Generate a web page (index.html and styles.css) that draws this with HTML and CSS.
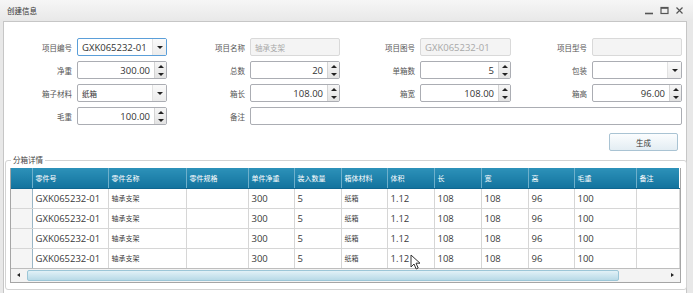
FILE: index.html
```html
<!DOCTYPE html>
<html>
<head>
  <title>创建信息</title>
  <link rel="stylesheet" href="styles.css">
</head>
<body>
  <div class="window">
    <div class="titlebar">
      <span class="title">创建信息</span>
      <div class="controls">
        <svg width="9" height="9" viewBox="0 0 9 9"><path d="M0 7.5h8" stroke="#555" stroke-width="1.6"/></svg>
        <svg width="9" height="9" viewBox="0 0 9 9"><rect x="1" y="1.5" width="7" height="6" fill="none" stroke="#555" stroke-width="1.2"/><path d="M1 2h7" stroke="#555" stroke-width="1.6"/></svg>
        <svg width="9" height="9" viewBox="0 0 9 9"><path d="M1.5 1.5l6 6M7.5 1.5l-6 6" stroke="#555" stroke-width="1.2"/></svg>
      </div>
    </div>

    <div class="panel">
      <div class="form">
        <label class="lbl">项目编号</label>
        <div class="field combo focus"><span class="val">GXK065232-01</span><span class="drop"><i class="down"></i></span></div>
        <label class="lbl">项目名称</label>
        <div class="field disabled"><span class="val cn">轴承支架</span></div>
        <label class="lbl">项目图号</label>
        <div class="field disabled"><span class="val">GXK065232-01</span></div>
        <label class="lbl">项目型号</label>
        <div class="field disabled"><span class="val"></span></div>

        <label class="lbl">净重</label>
        <div class="field num"><span class="val">300.00</span><span class="spinner"><span><i class="up"></i></span><span><i class="down"></i></span></span></div>
        <label class="lbl">总数</label>
        <div class="field num"><span class="val">20</span><span class="spinner"><span><i class="up"></i></span><span><i class="down"></i></span></span></div>
        <label class="lbl">单箱数</label>
        <div class="field num"><span class="val">5</span><span class="spinner"><span><i class="up"></i></span><span><i class="down"></i></span></span></div>
        <label class="lbl">包装</label>
        <div class="field combo"><span class="val"></span><span class="drop"><i class="down"></i></span></div>

        <label class="lbl">箱子材料</label>
        <div class="field combo"><span class="val cn">纸箱</span><span class="drop"><i class="down"></i></span></div>
        <label class="lbl">箱长</label>
        <div class="field num"><span class="val">108.00</span><span class="spinner"><span><i class="up"></i></span><span><i class="down"></i></span></span></div>
        <label class="lbl">箱宽</label>
        <div class="field num"><span class="val">108.00</span><span class="spinner"><span><i class="up"></i></span><span><i class="down"></i></span></span></div>
        <label class="lbl">箱高</label>
        <div class="field num"><span class="val">96.00</span><span class="spinner"><span><i class="up"></i></span><span><i class="down"></i></span></span></div>

        <label class="lbl">毛重</label>
        <div class="field num"><span class="val">100.00</span><span class="spinner"><span><i class="up"></i></span><span><i class="down"></i></span></span></div>
        <label class="lbl">备注</label>
        <div class="field memo"><span class="val"></span></div>
      </div>

      <div class="actions">
        <button class="button">生成</button>
      </div>

      <fieldset class="group">
        <legend>分箱详情</legend>
        <div class="grid">
          <table>
            <colgroup>
              <col style="width:21px"><col style="width:76px"><col style="width:78px"><col style="width:62px">
              <col style="width:46px"><col style="width:47px"><col style="width:46px"><col style="width:47px">
              <col style="width:47px"><col style="width:47px"><col style="width:46px"><col style="width:62px">
              <col style="width:43px">
            </colgroup>
            <thead>
              <tr>
                <th></th><th>零件号</th><th>零件名称</th><th>零件规格</th><th>单件净重</th><th>装入数量</th>
                <th>箱体材料</th><th>体积</th><th>长</th><th>宽</th><th>高</th><th>毛重</th><th>备注</th>
              </tr>
            </thead>
            <tbody>
              <tr><td class="rh"></td><td>GXK065232-01</td><td class="cn">轴承支架</td><td></td><td>300</td><td>5</td><td class="cn">纸箱</td><td>1.12</td><td>108</td><td>108</td><td>96</td><td>100</td><td></td></tr>
              <tr><td class="rh"></td><td>GXK065232-01</td><td class="cn">轴承支架</td><td></td><td>300</td><td>5</td><td class="cn">纸箱</td><td>1.12</td><td>108</td><td>108</td><td>96</td><td>100</td><td></td></tr>
              <tr><td class="rh"></td><td>GXK065232-01</td><td class="cn">轴承支架</td><td></td><td>300</td><td>5</td><td class="cn">纸箱</td><td>1.12</td><td>108</td><td>108</td><td>96</td><td>100</td><td></td></tr>
              <tr><td class="rh"></td><td>GXK065232-01</td><td class="cn">轴承支架</td><td></td><td>300</td><td>5</td><td class="cn">纸箱</td><td>1.12</td><td>108</td><td>108</td><td>96</td><td>100</td><td></td></tr>
            </tbody>
          </table>
          <div class="hscroll">
            <span class="arrow"><i class="left"></i></span>
            <span class="track"><span class="thumb"></span></span>
            <span class="arrow"><i class="right"></i></span>
          </div>
        </div>
      </fieldset>
    </div>

    <svg class="cursor" width="11" height="16" viewBox="0 0 11 16"><path d="M1 1v12l3-3 2.2 5 2-1-2.2-4.8H10z" fill="#fff" stroke="#333" stroke-width="1"/></svg>
  </div>
</body>
</html>
```

FILE: styles.css
```css
* {
  margin: 0;
  padding: 0;
  box-sizing: border-box;
}

body {
  width: 693px;
  height: 293px;
  overflow: hidden;
  background: #e8e8e8;
  font-family: "Open Sans", "Noto Sans CJK SC", sans-serif;
  font-size: 9.5px;
  color: #3a3a3a;
}

.window {
  position: relative;
  height: 100%;
  display: flex;
  flex-direction: column;
}

.titlebar {
  height: 20px;
  display: flex;
  align-items: center;
  justify-content: space-between;
  padding: 0 9px 0 7px;
  background: linear-gradient(#f6f6f6, #e9e9e9);
}

.title {
  font-size: 7.5px;
  color: #333;
}

.controls {
  display: flex;
  align-items: center;
  gap: 6px;
}

.panel {
  flex: 1;
  margin: 1px 6px 0 3px;
  background: #fff;
  border: 1px solid #c6c6c6;
  border-bottom: none;
}

.form {
  display: grid;
  grid-template-columns: 60px 90px 73px 90px 70px 91px 71px 90px;
  grid-auto-rows: 18px;
  column-gap: 5px;
  row-gap: 5px;
  padding: 16px 0 0 8px;
}

.lbl {
  display: flex;
  align-items: center;
  justify-content: flex-end;
  font-size: 7.5px;
  color: #555;
}

.field {
  display: flex;
  background: #fff;
  border: 1px solid #abadb3;
  border-radius: 2px;
  color: #333;
}

.field .val {
  flex: 1;
  display: flex;
  align-items: center;
  padding: 0 4px;
  white-space: nowrap;
  overflow: hidden;
}

.field .val.cn {
  font-size: 7.5px;
}

.field.focus {
  border-color: #5b9fd9;
}

.field.disabled {
  background: #f4f4f4;
  border-color: #d9d9d9;
  color: #a8a8a8;
}

.field.num .val {
  justify-content: flex-end;
}

.field.memo {
  grid-column: 4 / 9;
}

.drop {
  width: 14px;
  display: flex;
  align-items: center;
  justify-content: center;
  border-left: 1px solid #e2e2e2;
  background: linear-gradient(#fafafa, #ececec);
}

.spinner {
  width: 12px;
  display: flex;
  flex-direction: column;
  border-left: 1px solid #d4d4d4;
  background: linear-gradient(#f6f6f6, #e3e3e3);
}

.spinner span {
  flex: 1;
  display: flex;
  align-items: center;
  justify-content: center;
}

.up {
  border-left: 3px solid transparent;
  border-right: 3px solid transparent;
  border-bottom: 3px solid #222;
}

.down {
  border-left: 3px solid transparent;
  border-right: 3px solid transparent;
  border-top: 3px solid #222;
}

.left {
  border-top: 2.5px solid transparent;
  border-bottom: 2.5px solid transparent;
  border-right: 3px solid #222;
}

.right {
  border-top: 2.5px solid transparent;
  border-bottom: 2.5px solid transparent;
  border-left: 3px solid #222;
}

.actions {
  display: flex;
  justify-content: flex-end;
  padding: 8px 8px 0 0;
}

.button {
  width: 69px;
  height: 18px;
  font-family: "Noto Sans CJK SC", sans-serif;
  font-size: 7.5px;
  color: #333;
  background: linear-gradient(#fbfdfe, #e3edf3);
  border: 1px solid #a9c3d3;
  border-radius: 2px;
}

.group {
  margin: 4px 1px 0 1px;
  padding: 3px 5px 6px 4px;
  border: 1px solid #d3d3d3;
  border-radius: 3px;
}

.group legend {
  margin-left: 1px;
  padding: 0 2px;
  font-size: 7.5px;
  line-height: 10px;
  color: #444;
}

.grid {
  border: 1px solid #a5a5a5;
  border-top: none;
}

table {
  width: 666px;
  table-layout: fixed;
  border-collapse: collapse;
}

th {
  height: 20px;
  padding: 0 3px;
  text-align: left;
  font-size: 7px;
  font-weight: normal;
  color: #fff;
  background: linear-gradient(#2d91b9, #13739e);
  border-left: 1px solid #6eb0cc;
  border-bottom: 1px solid #0f6690;
}

th:first-child {
  border-left: none;
}

td {
  height: 20px;
  padding: 0 3px;
  border: 1px solid #d6d6d6;
  color: #3a3a3a;
  white-space: nowrap;
  overflow: hidden;
}

td.cn {
  font-size: 7px;
}

td.rh {
  background: #f5f5f5;
  border-left: none;
  border-right: 1px solid #9ab6c6;
}

tbody tr:last-child td {
  border-bottom: 1px solid #bdbdbd;
}

.hscroll {
  height: 13px;
  display: flex;
  align-items: stretch;
  background: #f3f3f3;
}

.arrow {
  width: 14px;
  display: flex;
  align-items: center;
  justify-content: center;
}

.track {
  flex: 1;
  display: flex;
  padding: 1px 47px 1px 2px;
}

.thumb {
  flex: 1;
  background: linear-gradient(#e2f1f7, #b8dae7);
  border: 1px solid #9cc6d7;
  border-radius: 2px;
}

.cursor {
  position: absolute;
  left: 410px;
  top: 254px;
}
```
